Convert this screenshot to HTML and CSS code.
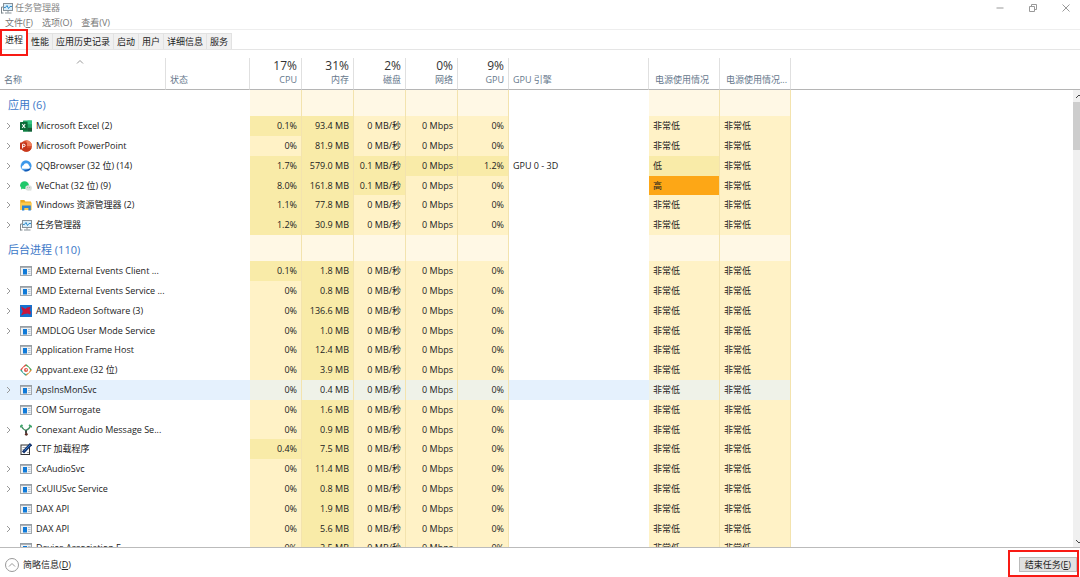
FILE: index.html
```html
<!DOCTYPE html>
<html lang="zh-CN">
<head>
  <meta charset="UTF-8" />
  <meta name="viewport" content="width=device-width, initial-scale=1.0"/>
  <title>任务管理器</title>
  <link rel="stylesheet" href="styles.css">
</head>
<body>
  <!-- Shared icons -->
  <svg class="sprite" aria-hidden="true">
    <symbol id="i-excel" viewBox="0 0 12 12">
      <rect x="3" y="0.5" width="9" height="11" rx="0.6" fill="#21a366"/>
      <path d="M7.5 0.5H12v3.7H7.5z" fill="#33c481"/>
      <path d="M3 4.2h4.5v7.3H3z" fill="#107c41"/>
      <path d="M7.5 7.8H12v3.7H7.5z" fill="#185c37"/>
      <rect x="0" y="2" width="7.5" height="8" rx="0.6" fill="#0b6b38"/>
      <path d="M2.2 4l3 4M5.2 4l-3 4" stroke="#fff" stroke-width="1.1"/>
    </symbol>
    <symbol id="i-ppt" viewBox="0 0 12 12">
      <circle cx="6.3" cy="6" r="5.7" fill="#d9502e"/>
      <path d="M6.3 0.3A5.7 5.7 0 0 1 12 6H6.3z" fill="#f0805c"/>
      <path d="M0.9 7.8h10.800A5.700 5.700 0 0 1 0.900 7.800z" fill="#c8381c"/>
      <rect x="0" y="2.6" width="7" height="7" rx="0.6" fill="#c5351a"/>
      <path d="M2.6 8.400V4.200h1.300a1.200 1.200 0 0 1 0 2.400H2.600" fill="none" stroke="#fff" stroke-width="1"/>
    </symbol>
    <symbol id="i-qq" viewBox="0 0 12 12">
      <circle cx="6" cy="6" r="5.700" fill="#b9d9f6"/>
      <path d="M6 0.600A5.400 5.400 0 0 1 11.400 6.500L10 8.800 3 10.300A5.400 5.400 0 0 1 6 0.600z" fill="#3b98ea"/>
      <path d="M2.300 8.800a2.300 2.300 0 0 1 1.200-3.600 2.900 2.900 0 0 1 5.500 0.300A2 2 0 0 1 9 8.800z" fill="#fff"/>
      <path d="M3.500 10.800C5 11.900 9.500 11.800 11.200 8.200 9 9.300 6 9 3.500 10.800z" fill="#125bb8"/>
    </symbol>
    <symbol id="i-wechat" viewBox="0 0 12 12">
      <path d="M1.300 7.800L1 9.600 3 8.500z" fill="#1fc86a"/>
      <ellipse cx="4.500" cy="5.200" rx="4.400" ry="3.900" fill="#1fc86a"/>
      <ellipse cx="8.600" cy="8" rx="3.300" ry="2.800" fill="#dbe1de"/>
      <path d="M10 10l1.200 1.200V9.500z" fill="#dbe1de"/>
      <circle cx="7.600" cy="7.500" r="0.400" fill="#888"/>
      <circle cx="9.700" cy="7.500" r="0.400" fill="#888"/>
    </symbol>
    <symbol id="i-folder" viewBox="0 0 12 12">
      <path d="M0.300 1h4l1 1.500H11v8.500H0.300z" fill="#e9a821"/>
      <path d="M0.300 3.500H11.700v7.500H0.300z" fill="#fdca4d"/>
      <path d="M2 11.500V6.500h8.800v5H8.400V9H4.300v2.500z" fill="#2b83d3"/>
    </symbol>
    <symbol id="i-monitor" viewBox="0 0 12 12">
      <path d="M0.500 11.500V5h1.500M0.500 11h2" fill="none" stroke="#7d868c"/>
      <rect x="2.500" y="1.500" width="9" height="7" fill="#d7ecf9" stroke="#879198"/>
      <path d="M3 5.500h1.500L6 3.500l1.500 3L9 4.500h2" fill="none" stroke="#1d82c6" stroke-width="0.900"/>
      <path d="M7 9v1.500M4 11h6.500" stroke="#879198"/>
    </symbol>
    <symbol id="i-app" viewBox="0 0 12 12">
      <rect x="0.500" y="1.500" width="11" height="9" fill="#eef1f4" stroke="#a1a7ad"/>
      <path d="M0 2h12" stroke="#949ba2" stroke-width="1.500"/>
      <rect x="3" y="4" width="4" height="5.500" fill="#0f7ad8"/>
      <path d="M8 4.500h2.500M8 6.500h2.500M8 8.500h2.500" stroke="#a8bccd" stroke-width="0.900"/>
    </symbol>
    <symbol id="i-radeon" viewBox="0 0 12 12">
      <rect x="0" y="0" width="12" height="12" fill="#1673cf"/>
      <path d="M1 1.500l3 1.500 1.500 1L7 2.500l3.800-0.800L9.500 5l1.300 2L10.300 9.800 7.800 8.500 4.500 9 1 10.500 2.800 6.500z" fill="#c9153c"/>
    </symbol>
    <symbol id="i-appvant" viewBox="0 0 12 12">
      <path d="M0.800 6L6 0.800" stroke="#e2483c" stroke-width="1.500"/>
      <path d="M6 0.800L11.200 6" stroke="#42a55a" stroke-width="1.500"/>
      <path d="M11.200 6L6 11.200" stroke="#d7903a" stroke-width="1.500"/>
      <path d="M6 11.200L0.800 6" stroke="#35a08f" stroke-width="1.500"/>
      <circle cx="6" cy="6" r="3.600" fill="#fff"/>
      <circle cx="6" cy="6" r="2" fill="#e05548"/>
      <circle cx="6.300" cy="5.800" r="0.700" fill="#fff"/>
    </symbol>
    <symbol id="i-conexant" viewBox="0 0 12 12">
      <path d="M1.500 2.500Q3 5.500 6 6.500 9 5.500 10.500 2" fill="none" stroke="#3c8c5e" stroke-width="1.500"/>
      <path d="M0 3L2.500 1M9 1l3 2" stroke="#3fa36b" stroke-width="1.800"/>
      <path d="M6 6.500v3" stroke="#333" stroke-width="1.800"/>
      <circle cx="6.300" cy="10.300" r="1.400" fill="#5a2b24"/>
    </symbol>
    <symbol id="i-ctf" viewBox="0 0 12 12">
      <rect x="1" y="2" width="8.500" height="9.500" fill="#fff" stroke="#333"/>
      <path d="M2.500 4.500h4M2.500 6.500h3M7 9.500h2" stroke="#888" stroke-width="0.700"/>
      <path d="M3 9.500L11 1" stroke="#15356f" stroke-width="3"/>
      <path d="M4.500 7.600L10 2" stroke="#3c86d8" stroke-width="0.900"/>
    </symbol>
  </svg>

  <header class="titlebar">
    <svg class="icon"><use href="#i-monitor"/></svg>
    <h1>任务管理器</h1>
    <div class="controls">
      <button aria-label="最小化"><svg viewBox="0 0 8 8"><path d="M0.500 4h7"/></svg></button>
      <button aria-label="还原"><svg viewBox="0 0 8 8"><path d="M0.500 2.500h5v5h-5zM2.500 2.500v-2h5v5h-2"/></svg></button>
      <button aria-label="关闭"><svg viewBox="0 0 8 8"><path d="M0.500 0.500l7 7M7.500 0.500l-7 7"/></svg></button>
    </div>
  </header>

  <nav class="menu">
    <button>文件(<u>F</u>)</button>
    <button>选项(O)</button>
    <button>查看(V)</button>
  </nav>

  <div class="tabs" role="tablist">
    <button class="tab active" role="tab" aria-selected="true">进程</button>
    <button class="tab" role="tab">性能</button>
    <button class="tab" role="tab">应用历史记录</button>
    <button class="tab" role="tab">启动</button>
    <button class="tab" role="tab">用户</button>
    <button class="tab" role="tab">详细信息</button>
    <button class="tab" role="tab">服务</button>
  </div>

  <main class="list">
    <table>
      <colgroup>
        <col class="c-name"><col class="c-status">
        <col class="c-num"><col class="c-num"><col class="c-num"><col class="c-num"><col class="c-gpu">
        <col class="c-engine"><col class="c-power"><col class="c-power"><col>
      </colgroup>
      <thead>
        <tr>
          <th class="name"><svg class="sort" viewBox="0 0 8 4"><path d="M1 3.500l3-3 3 3"/></svg>名称</th>
          <th class="status">状态</th>
          <th class="num"><b>17%</b>CPU</th>
          <th class="num"><b>31%</b>内存</th>
          <th class="num"><b>2%</b>磁盘</th>
          <th class="num"><b>0%</b>网络</th>
          <th class="num"><b>9%</b>GPU</th>
          <th>GPU 引擎</th>
          <th class="power">电源使用情况</th>
          <th class="power">电源使用情况...</th>
          <th class="rest"></th>
        </tr>
      </thead>
      <tbody id="apps"></tbody>
      <tbody id="background"></tbody>
    </table>
    <div class="scrollbar">
      <svg viewBox="0 0 8 12"><path d="M3 8l3-3 3 3"/></svg>
      <div class="thumb"></div>
      <svg viewBox="0 0 8 12"><path d="M3 5l3 3 3-3"/></svg>
    </div>
  </main>

  <footer class="footer">
    <button class="less">
      <svg viewBox="0 0 14 14"><circle cx="7" cy="7" r="6.500"/><path d="M4 8.500l3-3 3 3"/></svg>
      简略信息(<u>D</u>)
    </button>
    <div class="mark"><button class="end">结束任务(<u>E</u>)</button></div>
  </footer>

  <script>
    // icon, name, expandable, cpu, memory, disk, network, gpu, engine, power
    const apps = [
      ["excel", "Microsoft Excel (2)", 1, "0.1%", "93.4", "0", "0", "0%"],
      ["ppt", "Microsoft PowerPoint", 1, "0%", "81.9", "0", "0", "0%"],
      ["qq", "QQBrowser (32 位) (14)", 1, "1.7%", "579.0", "0.1", "0", "1.2%", "GPU 0 - 3D", "低"],
      ["wechat", "WeChat (32 位) (9)", 1, "8.0%", "161.8", "0.1", "0", "0%", "", "高"],
      ["folder", "Windows 资源管理器 (2)", 1, "1.1%", "77.8", "0", "0", "0%"],
      ["monitor", "任务管理器", 1, "1.2%", "30.9", "0", "0", "0%"]
    ];

    const background = [
      ["app", "AMD External Events Client ...", 0, "0.1%", "1.8", "0", "0", "0%"],
      ["app", "AMD External Events Service ...", 1, "0%", "0.8", "0", "0", "0%"],
      ["radeon", "AMD Radeon Software (3)", 1, "0%", "136.6", "0", "0", "0%"],
      ["app", "AMDLOG User Mode Service", 1, "0%", "1.0", "0", "0", "0%"],
      ["app", "Application Frame Host", 0, "0%", "12.4", "0", "0", "0%"],
      ["appvant", "Appvant.exe (32 位)", 0, "0%", "3.9", "0", "0", "0%"],
      ["app", "ApsInsMonSvc", 1, "0%", "0.4", "0", "0", "0%"],
      ["app", "COM Surrogate", 0, "0%", "1.6", "0", "0", "0%"],
      ["conexant", "Conexant Audio Message Se...", 1, "0%", "0.9", "0", "0", "0%"],
      ["ctf", "CTF 加载程序", 0, "0.4%", "7.5", "0", "0", "0%"],
      ["app", "CxAudioSvc", 1, "0%", "11.4", "0", "0", "0%"],
      ["app", "CxUIUSvc Service", 1, "0%", "0.8", "0", "0", "0%"],
      ["app", "DAX API", 0, "0%", "1.9", "0", "0", "0%"],
      ["app", "DAX API", 1, "0%", "5.6", "0", "0", "0%"],
      ["app", "Device Association F...", 0, "0%", "2.5", "0", "0", "0%"]
    ];

    const chevron = '<svg viewBox="0 0 5 8"><path d="M1 1l3 3-3 3"/></svg>';

    function heat(value) {
      return parseFloat(value) > 0 ? "warm" : "cool";
    }

    function rowHtml([icon, name, open, cpu, mem, disk, net, gpu, engine = "", power = "非常低"]) {
      const powerHeat = { "低": "warm", "高": "hot" }[power] || "cool";
      return `<tr class="${name === "ApsInsMonSvc" ? "selected" : ""}">
        <td class="name"><div>
          ${open ? `<button class="expand" aria-label="展开">${chevron}</button>` : '<span class="expand"></span>'}
          <svg class="icon"><use href="#i-${icon}"/></svg><span>${name}</span>
        </div></td>
        <td></td>
        <td class="num ${heat(cpu)}">${cpu}</td>
        <td class="num warm">${mem} MB</td>
        <td class="num ${heat(disk)}">${disk} MB/秒</td>
        <td class="num ${heat(gpu)}">${net} Mbps</td>
        <td class="num ${heat(gpu)}">${gpu}</td>
        <td>${engine}</td>
        <td class="${powerHeat}">${power}</td>
        <td class="cool">非常低</td>
        <td class="rest"></td>
      </tr>`;
    }

    function fill(id, title, rows) {
      const pale = '<td class="pale"></td>';
      document.getElementById(id).innerHTML =
        `<tr class="group"><th colspan="2">${title}</th>
        ${pale.repeat(5)}<td></td>${pale.repeat(2)}<td></td></tr>` + rows.map(rowHtml).join("");
    }

    fill("apps", "应用 (6)", apps);
    fill("background", "后台进程 (110)", background);
  </script>
</body>
</html>
```
FILE: styles.css
```css
* {
  box-sizing: border-box;
}

body {
  display: flex;
  flex-direction: column;
  height: 100vh;
  margin: 0;
  overflow: hidden;
  background: #fff;
  color: #222;
  font-family: "Open Sans", "Noto Sans CJK SC", sans-serif;
  font-size: 9px;
  line-height: 12px;
}

button {
  padding: 0;
  border: 0;
  background: none;
  color: inherit;
  font: inherit;
}

svg {
  fill: none;
  stroke: #999;
}

.sprite {
  display: none;
}

symbol {
  stroke: none;
}

.icon {
  flex: none;
  width: 12px;
  height: 12px;
  stroke: none;
}

/* Title bar and menu */
.titlebar {
  display: flex;
  align-items: center;
  height: 16px;
  padding-left: 1px;
  color: #888;
}

h1 {
  margin: 0 0 0 2px;
  font-size: 9px;
  font-weight: normal;
}

.controls {
  display: flex;
  gap: 25px;
  margin-left: auto;
  padding-right: 10px;
}

.controls svg {
  display: block;
  width: 8px;
  height: 8px;
}

.menu {
  display: flex;
  gap: 9px;
  height: 14px;
  padding-left: 5px;
  border-bottom: 1px solid #eee;
  color: #777;
}

/* Tabs */
.tabs {
  display: flex;
  align-items: flex-end;
  height: 20px;
  border-bottom: 1px solid #e5e5e5;
}

.tab {
  height: 16px;
  padding: 0 3px;
  border: 1px solid #e2e2e2;
  border-width: 1px 1px 0 0;
  background: #f0f0f0;
}

.tab.active {
  position: relative;
  width: 28px;
  height: 18px;
  border: 0;
  background: #fff;
}

/* Red frame drawn over the active tab */
.tab.active::after {
  content: "";
  position: absolute;
  inset: -2px 0 -7px;
  z-index: 1;
  border: 2px solid #f81a14;
}

/* Process list */
.list {
  position: relative;
  flex: 1;
  min-height: 0;
  overflow: hidden;
  padding-top: 8px;
}

table {
  width: 100%;
  table-layout: fixed;
  border-collapse: separate;
  border-spacing: 0;
}

.c-name {
  width: 166px;
}

.c-status {
  width: 84px;
}

.c-num {
  width: 52px;
}

.c-gpu {
  width: 51px;
}

.c-engine {
  width: 140px;
}

.c-power {
  width: 71px;
}

th, td {
  height: 20px;
  padding: 0 4px;
  overflow: hidden;
  text-align: left;
  white-space: nowrap;
}

thead th {
  height: 32px;
  padding-bottom: 3px;
  border-right: 1px solid #e0e0e0;
  border-bottom: 1px solid #b5b5b5;
  color: #66788c;
  font-weight: normal;
  vertical-align: bottom;
}

thead .power {
  padding-left: 6px;
}

thead b {
  display: block;
  color: #333;
  font-size: 12px;
  font-weight: normal;
  line-height: 16px;
}

thead .rest {
  border-right: 0;
}

.sort {
  display: block;
  width: 8px;
  height: 4px;
  margin: 0 auto 10px 72px;
}

.num {
  text-align: right;
}

/* Every fifth row is a pixel shorter */
tbody tr:nth-child(5n) td {
  height: 19px;
}

.group th, .group td {
  height: 26px;
}

.group th {
  padding: 4px 0 0 8px;
  color: #3c78c8;
  font-size: 11px;
  font-weight: normal;
}

.pale, .cool, .warm, .hot {
  border-right: 1px solid #f3e3ae;
}

.pale {
  background: #fff8e5;
}

.cool {
  background: #fff2c6;
}

.warm {
  background: #f9eba8;
}

.hot {
  background: #fda716;
}

.selected td {
  background: #e5f1fd;
}

.selected .cool, .selected .warm {
  background: #eff2e8;
}

.selected .rest {
  background: none;
}

td.name div {
  display: flex;
  align-items: center;
}

.expand {
  flex: none;
  width: 9px;
  height: 8px;
  margin-right: 7px;
}

.expand svg {
  display: block;
  width: 5px;
  height: 8px;
  margin-left: 2px;
}

td.name span:last-child {
  margin-left: 4px;
}

.scrollbar {
  position: absolute;
  top: 40px;
  right: 0;
  bottom: 0;
  display: flex;
  flex-direction: column;
  width: 7px;
  background: #f0f0f0;
}

.scrollbar svg {
  width: 8px;
  height: 12px;
  stroke: #444;
}

.scrollbar .thumb {
  height: 48px;
  margin-bottom: auto;
  background: #cdcdcd;
}

/* Footer */
.footer {
  display: flex;
  align-items: flex-start;
  justify-content: space-between;
  height: 30px;
  padding: 2px 1px 1px 5px;
  border-top: 1px solid #bbb;
}

.less {
  display: flex;
  align-items: center;
  height: 30px;
}

.less svg {
  width: 14px;
  height: 14px;
  margin-right: 4px;
}

.mark {
  display: flex;
  height: 27px;
  padding: 5px 0 3px 9px;
  border: 2px solid #f81a14;
}

.end {
  padding: 0 5px;
  border: 1px solid #bbb;
  background: #e1e1e1;
}
```
